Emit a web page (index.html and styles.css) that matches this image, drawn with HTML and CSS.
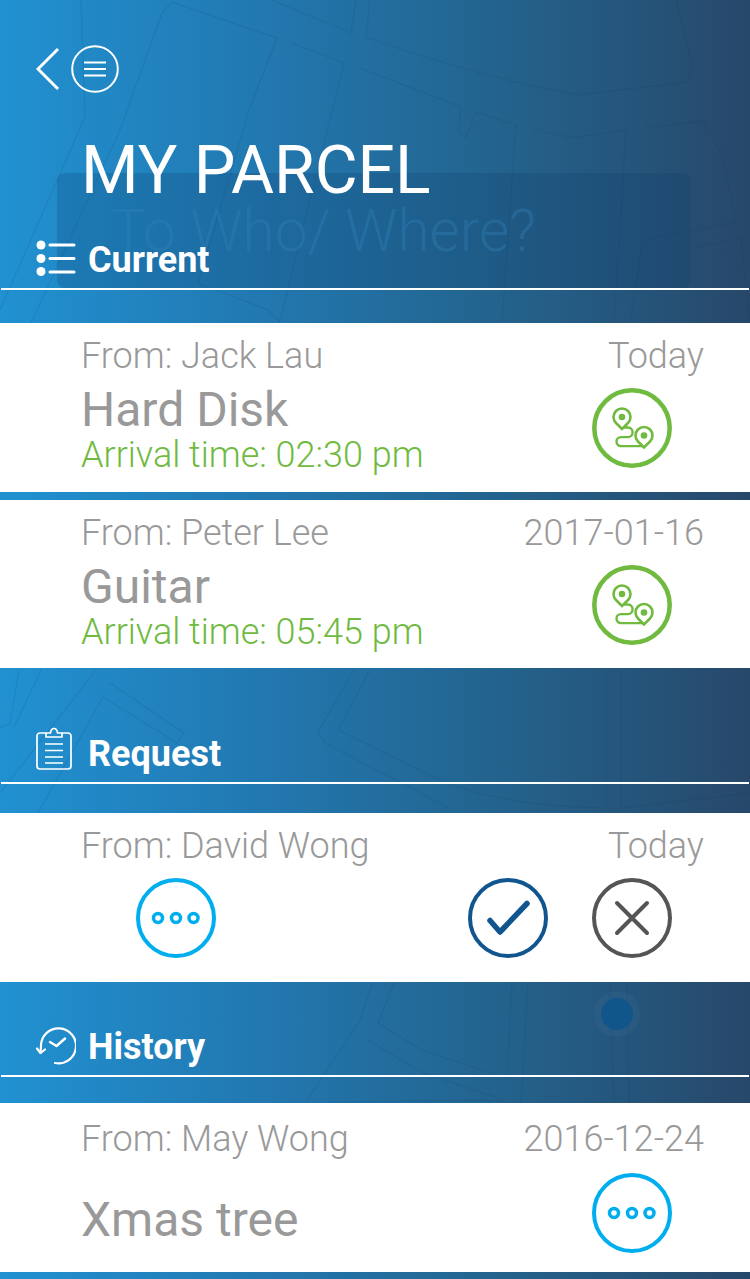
FILE: index.html
```html
<!DOCTYPE html>
<html lang="en">
<head>
  <meta charset="UTF-8">
  <meta name="viewport" content="width=device-width, initial-scale=1.0">
  <title>My Parcel</title>
  <link rel="stylesheet" href="styles.css">
</head>
<body>
  <svg class="map" viewBox="0 0 750 1279" aria-hidden="true">
    <!-- faint street map behind everything -->
    <g class="streets">
      <path d="M172 2L277 38L249 110L198 283L268 310L280 322"/>
      <path d="M172 2L162 13L120 130L31 323"/>
      <path d="M292 43L344 63L280 322"/>
      <path d="M360 68L461 107L459 132L466 138L476 112L516 125L502 322"/>
      <path d="M272 0L351 33L356 0M370 0L366 37Q470 75 578 95L688 82L692 63L679 13L676 0"/>
      <path d="M533 128Q556 137 578 137L626 130L614 322"/>
      <path d="M643 128L703 121L724 160L736 222L643 240L630 322"/>
      <path d="M693 248L741 238L750 322M81 0L85 117L0 310"/>
      <path d="M110 683L184 733L177 743L103 697L38 813M96 670L0 793"/>
      <path d="M354 670L318 732L325 743L449 808M370 670L338 730L440 780Q500 806 606 808V670M621 670V808L750 793"/>
      <path d="M19 670L10 723L0 728M41 670L14 727"/>
      <path d="M373 983L359 1022L306 1102M394 983L378 1023L421 1050L507 1078L512 983M368 1040L421 1072L504 1100L327 1102"/>
      <path d="M528 983L521 1102M610 983L614 1102M627 983L629 1102"/>
    </g>
    <circle class="pin-halo" cx="617" cy="1014" r="23"/>
    <circle class="pin-dot" cx="617" cy="1014" r="16"/>
  </svg>

  <div class="ghost-search"><span>To Who/ Where?</span></div>

  <svg class="defs" aria-hidden="true">
    <symbol id="i-route" viewBox="0 0 80 80">
      <circle cx="40" cy="40" r="37.700" fill="none" stroke="currentColor" stroke-width="4.500"/>
      <path d="M30 39.500H36a4.600 4.800 0 0 1 0 9.600H29a4.500 4.500 0 0 0 0 9H52" fill="none" stroke="currentColor" stroke-width="2.400"/>
      <path d="M30 41L24 35a8.500 8.500 0 1 1 12 0Z" fill="#fff" stroke="currentColor" stroke-width="2.600"/>
      <circle cx="30" cy="29" r="3.300" fill="currentColor"/>
      <path d="M52 59.500L46 53.500a8.500 8.500 0 1 1 12 0Z" fill="#fff" stroke="currentColor" stroke-width="2.600"/>
      <circle cx="52" cy="47.500" r="3.300" fill="currentColor"/>
    </symbol>
    <symbol id="i-more" viewBox="0 0 80 80">
      <circle cx="40" cy="40" r="38" fill="none" stroke="currentColor" stroke-width="4"/>
      <g fill="none" stroke="currentColor" stroke-width="3.500">
        <circle cx="22" cy="40" r="4.500"/>
        <circle cx="40" cy="40" r="4.500"/>
        <circle cx="57.500" cy="40" r="4.500"/>
      </g>
    </symbol>
  </svg>

  <main class="page">
    <header class="band band-current">
      <nav class="topbar">
        <svg class="icon-back" viewBox="0 0 24 44"><path d="M22 2L2 22L22 42"/></svg>
        <svg class="icon-menu" viewBox="0 0 48 48">
          <circle cx="24" cy="24" r="22.800"/>
          <path d="M13 17.500H35M13 24H35M13 30.500H35"/>
        </svg>
      </nav>
      <h1 class="page-title">MY PARCEL</h1>
      <h2 class="section-head">
        <svg class="head-icon icon-list" viewBox="0 0 40 36">
          <g fill="#fff"><circle cx="5" cy="5" r="4.500"/><circle cx="5" cy="18.500" r="4.500"/><circle cx="5" cy="31.500" r="4.500"/></g>
          <path d="M14 5H38M14 18.500H38M14 32H38" fill="none" stroke="#fff" stroke-width="3" stroke-linecap="round"/>
        </svg>
        Current
      </h2>
    </header>

    <article class="parcel">
      <div class="parcel-info">
        <p class="from">From: Jack Lau</p>
        <p class="item">Hard Disk</p>
        <p class="arrival">Arrival time: 02:30 pm</p>
      </div>
      <div class="parcel-side">
        <p class="date">Today</p>
        <svg class="round-btn green"><use href="#i-route"/></svg>
      </div>
    </article>

    <article class="parcel parcel-next">
      <div class="parcel-info">
        <p class="from">From: Peter Lee</p>
        <p class="item">Guitar</p>
        <p class="arrival">Arrival time: 05:45 pm</p>
      </div>
      <div class="parcel-side">
        <p class="date">2017-01-16</p>
        <svg class="round-btn green"><use href="#i-route"/></svg>
      </div>
    </article>

    <section class="band band-request">
      <h2 class="section-head">
        <svg class="head-icon icon-clip" viewBox="0 0 40 44">
          <g fill="none" stroke="#fff" stroke-width="1.700" stroke-linejoin="round">
            <path d="M11 6H5a3 3 0 0 0-3 3V39a3 3 0 0 0 3 3H33a3 3 0 0 0 3-3V9a3 3 0 0 0-3-3H27"/>
            <path d="M11 10V6H15.500Q16 1.500 19 1.500T22.500 6H27V10Z"/>
            <path d="M10 17H28M10 23.500H28M10 30H28M10 36H28"/>
          </g>
        </svg>
        Request
      </h2>
    </section>

    <article class="parcel request">
      <div class="request-top">
        <p class="from">From: David Wong</p>
        <p class="date">Today</p>
      </div>
      <div class="request-actions">
        <svg class="round-btn blue more-btn"><use href="#i-more"/></svg>
        <svg class="round-btn navy" viewBox="0 0 80 80">
          <circle cx="40" cy="40" r="38" fill="none" stroke="currentColor" stroke-width="4"/>
          <path d="M22 42.500L32 54L59 25.500" fill="none" stroke="currentColor" stroke-width="5.500" stroke-linecap="round" stroke-linejoin="round"/>
        </svg>
        <svg class="round-btn grey" viewBox="0 0 80 80">
          <circle cx="40" cy="40" r="38" fill="none" stroke="currentColor" stroke-width="4"/>
          <path d="M25 25L55 55M55 25L25 55" fill="none" stroke="currentColor" stroke-width="4" stroke-linecap="round"/>
        </svg>
      </div>
    </article>

    <section class="band band-history">
      <h2 class="section-head">
        <svg class="head-icon icon-history" viewBox="0 0 40 38">
          <g fill="none" stroke="#fff" stroke-width="2.200" stroke-linecap="round" stroke-linejoin="round">
            <path d="M19 36A17.500 17.500 0 1 0 5 19L4.500 26"/>
            <path d="M1 21.500L4.500 26L9 22.500"/>
            <path d="M14 15L20.500 19L29 11.500" stroke-width="2.400"/>
          </g>
        </svg>
        History
      </h2>
    </section>

    <article class="parcel parcel-last">
      <div class="parcel-info">
        <p class="from">From: May Wong</p>
        <p class="item">Xmas tree</p>
      </div>
      <div class="parcel-side">
        <p class="date">2016-12-24</p>
        <svg class="round-btn blue"><use href="#i-more"/></svg>
      </div>
    </article>
  </main>
</body>
</html>
```

FILE: styles.css
```css
* { box-sizing: border-box; }
html, body { margin: 0; padding: 0; }
body { position: relative; width: 750px; height: 1279px; overflow: hidden; font-family: Roboto, "Liberation Sans", sans-serif; color: #999; background: linear-gradient(90deg, #2191d1 0%, #2278b0 35%, #23648f 65%, #27486a 100%); }
h1, h2, p { margin: 0; }

.defs { position: absolute; width: 0; height: 0; }
.map { position: absolute; left: 0; top: 0; width: 750px; height: 1279px; }
.streets path { fill: none; stroke: rgba(20, 60, 100, 0.12); stroke-width: 1.2; }
.pin-halo { fill: rgba(70, 120, 160, 0.16); }
.pin-dot { fill: #11568a; }

.ghost-search { position: absolute; left: 57px; top: 173px; width: 634px; height: 115px; padding: 24px 0 0 54px; border-radius: 8px; background: rgba(15, 60, 105, 0.22); color: rgba(50, 130, 185, 0.36); font-size: 58.500px; font-weight: 300; line-height: 68px; white-space: nowrap; }

.page { position: relative; }

.band { color: #fff; }
.band-current { height: 323px; padding-top: 46px; }
.band-request { height: 145px; padding-top: 59px; }
.band-history { height: 121px; padding-top: 38px; }

.topbar { display: flex; align-items: center; gap: 11px; height: 46px; padding-left: 36px; }
.icon-back { width: 24px; height: 44px; fill: none; stroke: #fff; stroke-width: 3; }
.icon-menu { width: 48px; height: 48px; fill: none; stroke: #fff; stroke-width: 2; }

.page-title { height: 141px; padding: 36px 0 0 81px; color: #fff; font-size: 66px; font-weight: 400; line-height: 86px; }

.section-head { display: flex; align-items: center; gap: 12px; height: 57px; margin: 0 1px; padding: 0 0 2px 35px; border-bottom: 2px solid #fff; color: #fff; font-size: 36px; font-weight: 700; line-height: 44px; }
.head-icon { flex: none; width: 40px; height: 38px; }
.icon-list { height: 36px; margin-bottom: 4px; }
.icon-clip { height: 44px; margin: 0 1px 10px -1px; }
.icon-history { margin-bottom: 2px; }

.parcel { display: flex; justify-content: space-between; height: 169px; padding: 13px 46px 0 81px; background: #fff; }
.parcel-next { height: 168px; margin-top: 8px; }
.from, .date { font-size: 36px; font-weight: 300; line-height: 40px; white-space: nowrap; }
.item { margin-top: 9px; font-size: 48px; font-weight: 400; line-height: 50px; }
.arrival { color: #6fba3f; font-size: 36px; font-weight: 300; line-height: 40px; white-space: nowrap; }
.parcel-side { display: flex; flex-direction: column; align-items: flex-end; }

.round-btn { display: block; flex: none; width: 80px; height: 80px; }
.parcel-side .round-btn { margin: 12px 32px 0 0; }
.parcel-last { padding-top: 16px; }
.parcel-last .item { margin-top: 36px; }
.parcel-last .parcel-side .round-btn { margin-top: 14px; }
.green { color: #6fba3f; }
.blue { color: #00aeef; }
.navy { color: #11558f; }
.grey { color: #555; }

.request { display: block; }
.request-top { display: flex; justify-content: space-between; }
.request-actions { display: flex; gap: 44px; margin: 12px 32px 0 0; }
.more-btn { margin: 0 auto 0 55px; }
```
